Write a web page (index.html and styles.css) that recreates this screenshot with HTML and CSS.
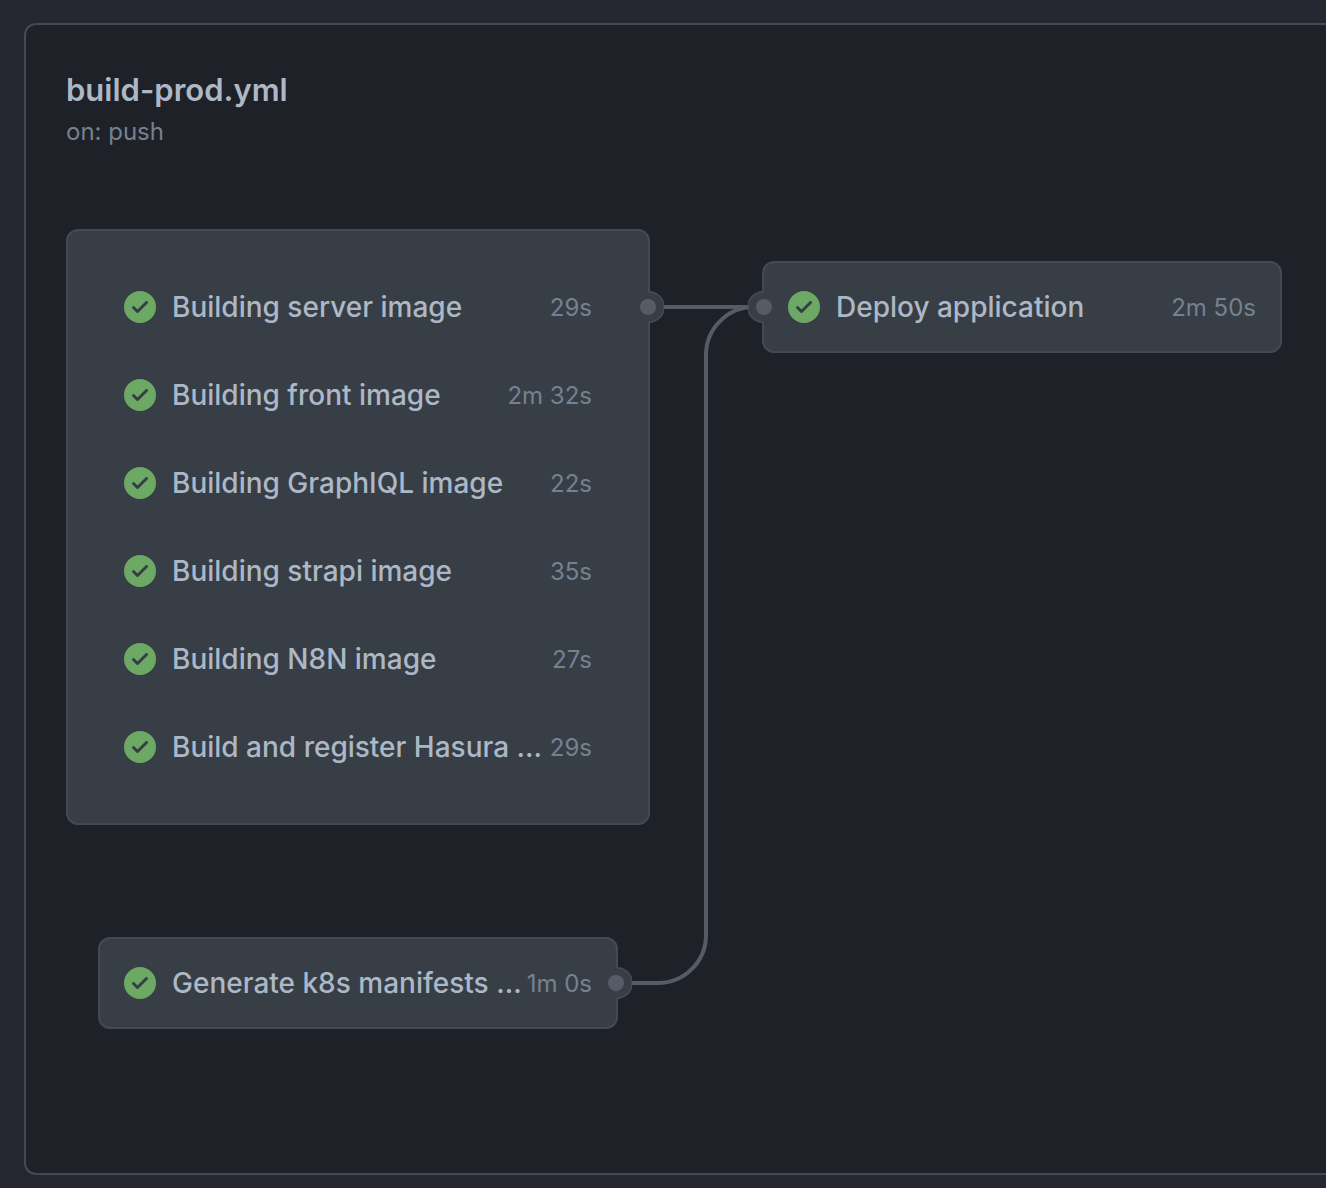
FILE: index.html
```html
<!DOCTYPE html>
<html lang="en">
<head>
<meta charset="utf-8">
<title>build-prod.yml</title>
<meta name="viewport" content="width=device-width, initial-scale=1">
<link rel="stylesheet" href="styles.css">
</head>
<body>
<svg class="sprite" aria-hidden="true">
  <symbol id="check" viewBox="0 0 32 32">
    <circle class="check-disc" cx="16" cy="16" r="16"/>
    <path class="check-mark" d="M9.5 16.5 13.5 20.5 22.5 11.5"/>
  </symbol>
  <symbol id="port" viewBox="0 0 32 32">
    <circle class="port-base" cx="16" cy="16" r="15"/>
    <path class="port-rim" d="M17 1A15 15 0 0 1 17 31"/>
    <circle class="port-dot" cx="16" cy="16" r="8"/>
  </symbol>
</svg>
<main class="panel">
  <header class="panel-header">
    <h1 class="title">build-prod.yml</h1>
    <p class="trigger">on: push</p>
  </header>
  <div class="graph">
    <svg class="connectors" aria-hidden="true">
      <path d="M582 78H698"/>
      <path d="M550 754H592A48 48 0 0 0 640 706V126A48 48 0 0 1 688 78"/>
    </svg>
    <div class="column">
      <section class="card group">
        <div class="job">
          <svg class="icon"><use href="#check"/></svg><span class="name">Building server image</span><span class="time">29s</span>
        </div>
        <div class="job">
          <svg class="icon"><use href="#check"/></svg><span class="name">Building front image</span><span class="time">2m 32s</span>
        </div>
        <div class="job">
          <svg class="icon"><use href="#check"/></svg><span class="name">Building GraphIQL image</span><span class="time">22s</span>
        </div>
        <div class="job">
          <svg class="icon"><use href="#check"/></svg><span class="name">Building strapi image</span><span class="time">35s</span>
        </div>
        <div class="job">
          <svg class="icon"><use href="#check"/></svg><span class="name">Building N8N image</span><span class="time">27s</span>
        </div>
        <div class="job">
          <svg class="icon"><use href="#check"/></svg><span class="name">Build and register Hasura ...</span><span class="time">29s</span>
        </div>
        <svg class="port port-out"><use href="#port"/></svg>
      </section>
      <section class="card single">
        <div class="job">
          <svg class="icon"><use href="#check"/></svg><span class="name">Generate k8s manifests ...</span><span class="time">1m 0s</span>
        </div>
        <svg class="port port-out"><use href="#port"/></svg>
      </section>
    </div>
    <div class="column column-deploy">
      <section class="card">
        <div class="job">
          <svg class="icon"><use href="#check"/></svg><span class="name">Deploy application</span><span class="time">2m 50s</span>
        </div>
        <svg class="port port-in"><use href="#port"/></svg>
      </section>
    </div>
  </div>
</main>
</body>
</html>
```

FILE: styles.css
```css
* {
  box-sizing: border-box;
}

body {
  margin: 0;
  padding: 23px 0 13px 24px;
  background: #24272f;
  color: #adb8c6;
  font-family: Inter, "Liberation Sans", sans-serif;
}

.sprite {
  position: absolute;
  width: 0;
  height: 0;
}

.panel {
  padding: 40px 44px 144px 40px;
  border: 2px solid #444a54;
  border-right: 0;
  border-radius: 12px 0 0 12px;
  background: #1e2128;
}

.panel-header {
  margin-bottom: 80px;
}

.title {
  margin: 0;
  font-size: 31px;
  line-height: 50px;
  font-weight: 600;
}

.trigger {
  margin: 0;
  color: #768190;
  font-size: 24px;
  line-height: 34px;
}

.graph {
  position: relative;
  display: flex;
  align-items: flex-start;
  gap: 112px;
}

.connectors {
  position: absolute;
  top: 0;
  left: 0;
  width: 100%;
  height: 100%;
  fill: none;
  stroke: #555c66;
  stroke-width: 4px;
}

.column {
  display: flex;
  flex-direction: column;
  gap: 112px;
  flex: 0 0 584px;
}

.column-deploy {
  flex: 0 0 520px;
  padding-top: 32px;
}

.card {
  position: relative;
  border: 2px solid #444a54;
  border-radius: 12px;
  background: #383e46;
}

.group {
  padding: 32px;
}

.single {
  margin: 0 32px;
}

.job {
  display: flex;
  align-items: center;
  height: 88px;
  padding: 0 24px;
}

.icon {
  flex: none;
  width: 32px;
  height: 32px;
  margin-right: 16px;
}

.check-disc {
  fill: #6ca965;
}

.check-mark {
  fill: none;
  stroke: #383e46;
  stroke-width: 3px;
  stroke-linecap: round;
  stroke-linejoin: round;
}

.name {
  flex: 1;
  font-size: 28px;
  line-height: 40px;
  font-weight: 500;
  white-space: nowrap;
}

.time {
  padding-top: 2px;
  color: #768190;
  font-size: 24px;
  line-height: 34px;
  white-space: nowrap;
}

.port {
  position: absolute;
  top: 28px;
  width: 32px;
  height: 32px;
}

.group .port {
  top: 60px;
}

.port-out {
  right: -16px;
}

.port-in {
  left: -16px;
  transform: scaleX(-1);
}

.port-base {
  fill: #383e46;
}

.port-rim {
  fill: none;
  stroke: #444a54;
  stroke-width: 2px;
}

.port-dot {
  fill: #555c66;
}
```
